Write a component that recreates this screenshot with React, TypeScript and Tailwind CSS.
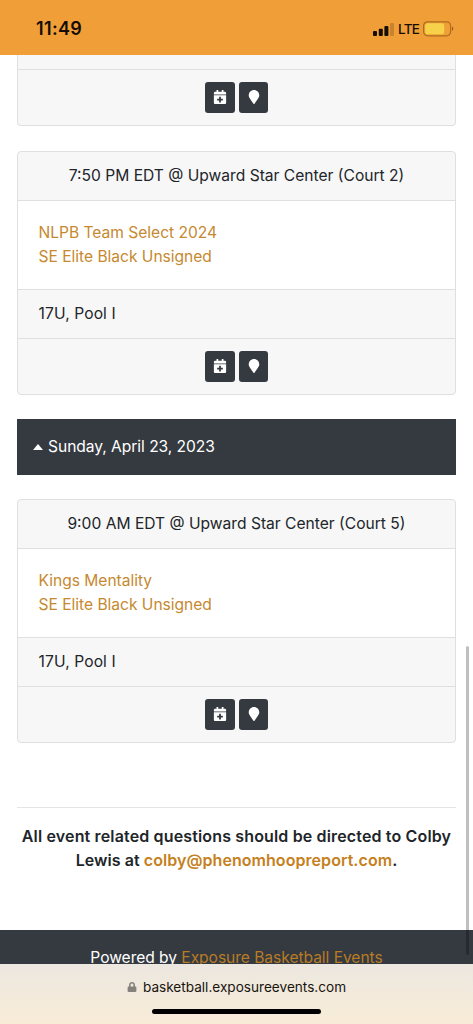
import React from 'react';
import { FaCalendarPlus, FaLock, FaMapMarker } from 'react-icons/fa';

interface Game {
  time: string;
  location: string;
  teams: string[];
  division: string;
}

const saturdayGame: Game = {
  time: '7:50 PM EDT',
  location: 'Upward Star Center (Court 2)',
  teams: ['NLPB Team Select 2024', 'SE Elite Black Unsigned'],
  division: '17U, Pool I',
};

const sundayGame: Game = {
  time: '9:00 AM EDT',
  location: 'Upward Star Center (Court 5)',
  teams: ['Kings Mentality', 'SE Elite Black Unsigned'],
  division: '17U, Pool I',
};

// ==========================================
// STATUS BAR
// ==========================================
const SignalIcon = () => (
  <svg width="21" height="13" viewBox="0 0 21 13" fill="#150d04" className="shrink-0">
    <rect x="0" y="8" width="4" height="5" rx="1" />
    <rect x="5.8" y="5.7" width="4" height="7.3" rx="1" />
    <rect x="11.4" y="3" width="4" height="10" rx="1" />
    <rect x="17" y="0" width="4" height="13" rx="1" fill="#c9832e" />
  </svg>
);

const BatteryIcon = () => (
  <svg width="31" height="16" viewBox="0 0 31 16" className="shrink-0">
    <rect x="0.6" y="0.8" width="27" height="14" rx="4" fill="none" stroke="#b06d1c" strokeWidth="1.2" />
    <rect x="2.2" y="2.3" width="19" height="11" rx="2.5" fill="#f7d148" />
    <path d="M29 5.6c1.6.7 1.6 3.7 0 4.4z" fill="#8f5718" />
  </svg>
);

function StatusBar() {
  return (
    <div className="flex h-[55px] shrink-0 items-center justify-between bg-[#f09f38] pt-[3px] pr-[19px] pl-9">
      <span className="text-[18px] leading-6 font-semibold tracking-[0.35px] text-[#150d04]">11:49</span>
      <div className="flex items-center">
        <SignalIcon />
        <span className="mr-[5px] ml-1 w-5 text-[13.5px] leading-4 font-medium tracking-[-0.7px] text-[#150d04]">LTE</span>
        <BatteryIcon />
      </div>
    </div>
  );
}

// ==========================================
// GAME CARD
// ==========================================
function CardActions() {
  return (
    <div className="flex h-[56px] items-center justify-center gap-1 border-t border-[#dfdfdf]">
      <button className="flex h-[31px] w-[30px] items-center justify-center rounded-[3px] bg-[#343a3f] pb-px text-white">
        <FaCalendarPlus size={14} />
      </button>
      <button className="flex h-[31px] w-[29px] items-center justify-center rounded-[3px] bg-[#343a3f] pb-px text-white">
        <FaMapMarker size={14} />
      </button>
    </div>
  );
}

function GameCard({ game }: { game: Game }) {
  return (
    <div className="overflow-hidden rounded border border-[#dfdfdf] bg-[#f7f7f7]">
      <div className="h-12 text-center leading-[47px]">
        {game.time} @ {game.location}
      </div>
      <div className="flex h-[89px] flex-col justify-center border-t border-[#dfdfdf] bg-white px-[20.6px] tracking-[-0.03px] text-[#c58930]">
        {game.teams.map((team) => (
          <a key={team} className="leading-6">{team}</a>
        ))}
      </div>
      <div className="h-[49px] border-t border-[#dfdfdf] px-[20.6px] leading-[47px] tracking-[0.1px]">{game.division}</div>
      <CardActions />
    </div>
  );
}

export default function App() {
  return (
    <div className="relative flex h-[1024px] w-[473px] flex-col overflow-hidden bg-white font-['Inter',sans-serif] text-[15.6px] text-[#212529]">
      <StatusBar />

      <main className="h-[875px] shrink-0 px-[17px]">
        {/* Tail of the previous game, scrolled under the status bar */}
        <div className="mb-[25px] rounded-b border border-t-0 border-[#dfdfdf] bg-[#f7f7f7] pt-[14px]">
          <CardActions />
        </div>

        <GameCard game={saturdayGame} />

        <div className="my-6 flex h-14 items-center bg-[#343a3f] pl-4 tracking-[-0.05px] text-white">
          <svg width="10" height="6" viewBox="0 0 10 6" fill="currentColor" className="mr-[5px]">
            <path d="M0 6 5 0l5 6z" />
          </svg>
          Sunday, April 23, 2023
        </div>

        <GameCard game={sundayGame} />

        <hr className="mt-16 mb-4 border-[#e5e5e5]" />
        <p className="text-center text-[16px] leading-6 font-semibold tracking-[0.06px]">
          <span className="tracking-[0.15px]">All event related questions should be directed to Colby</span>
          <br />
          Lewis at <a className="text-[#c58020]">colby@phenomhoopreport.com</a>.
        </p>
      </main>

      <footer className="h-[34px] shrink-0 bg-[#343a3f] pt-4 text-center leading-6 tracking-[-0.05px] text-white">
        Powered by <a className="text-[#b87b26]">Exposure Basketball Events</a>
      </footer>

      {/* Scroll thumb */}
      <div className="absolute top-[646px] right-1 h-[309px] w-[3px] rounded-full bg-black/25"></div>

      {/* Safari address bar */}
      <div className="relative flex grow flex-col items-center bg-linear-to-b from-[#ece7e0] to-[#f8ecd7]">
        <div className="flex h-[45px] items-center gap-[6px] pt-px text-[13.6px] text-[#17140f]">
          <FaLock size={10} className="text-[#86817b]" />
          basketball.exposureevents.com
        </div>
        <div className="h-[5px] w-[169px] rounded-full bg-black"></div>
      </div>
    </div>
  );
}
